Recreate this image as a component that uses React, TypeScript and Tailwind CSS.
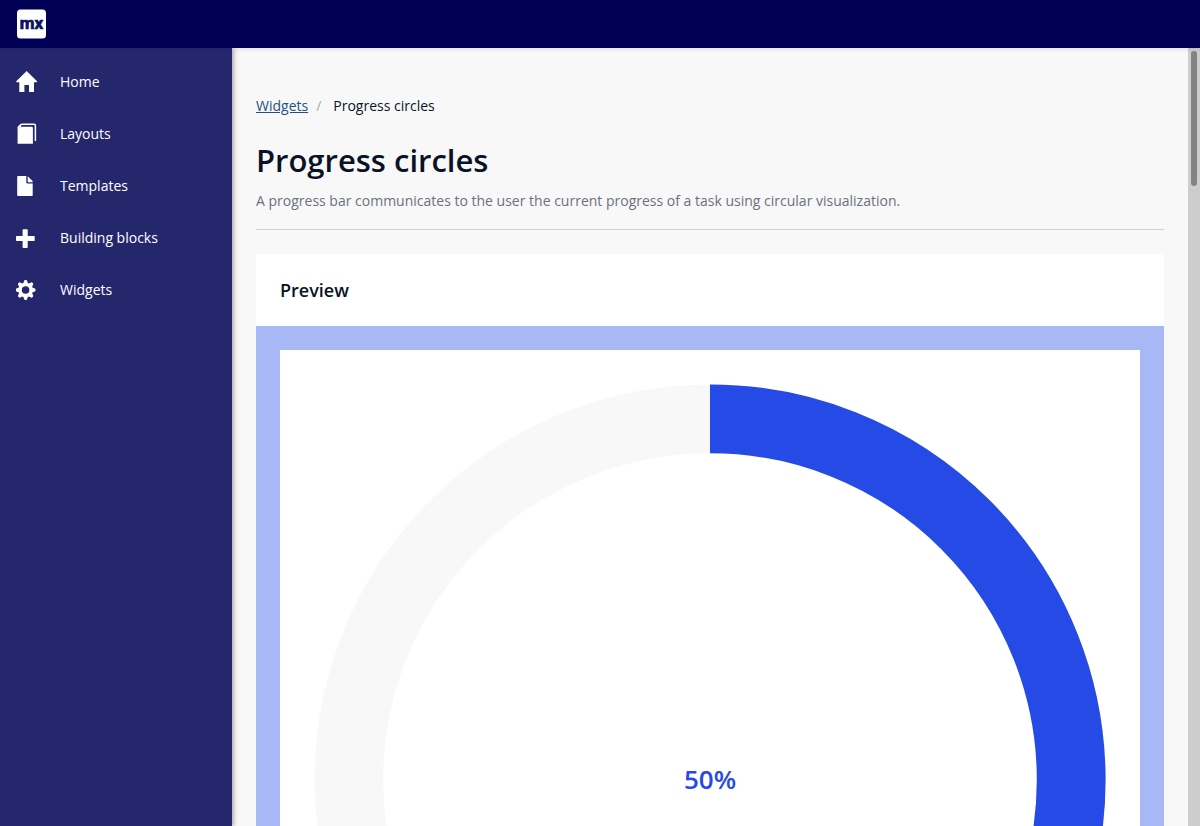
import type { ReactNode } from 'react';

const navItems: { label: string; icon: ReactNode }[] = [
  {
    label: 'Home',
    icon: <path d="M10.700 0 21.300 10.500 20.500 11.200H18V20.500Q18 21 17.500 21H13V14H8.400V21H3.800Q3.300 21 3.300 20.500V11.200H.800L0 10.500Z" />,
  },
  {
    label: 'Layouts',
    icon: (
      <>
        <path d="M2 4.500 4.200 2.200Q5.200 1.200 6.500 1.200H18Q19.400 1.200 19.400 2.600V18" fill="none" stroke="currentColor" strokeWidth="1.500" />
        <path d="M5.200 3.700H15.600Q16.900 3.700 16.900 5V20.700H1.600V5.500Q3.800 5.200 5.200 3.700Z" />
        <path d="M1.600 6V4.500L4.600 1.400 5.200 4Z" />
      </>
    ),
  },
  {
    label: 'Templates',
    icon: (
      <>
        <path d="M2 1H10.300V7.600Q10.300 8.600 11.300 8.600H16.700V20.300Q16.700 21 16 21H1.900Q1.200 21 1.200 20.300V1.700Q1.200 1 2 1Z" />
        <path d="M11.700 1.200 16.600 6V7.200H12.200Q11.700 7.200 11.700 6.700Z" />
      </>
    ),
  },
  {
    label: 'Building blocks',
    icon: <path d="M7.300 2.300H11Q11.700 2.300 11.700 3V9.100H18Q18.700 9.100 18.700 9.800V13.300Q18.700 14 18 14H11.700V20.300Q11.700 21 11 21H7.300Q6.600 21 6.600 20.300V14H.700Q0 14 0 13.300V9.800Q0 9.100 .700 9.100H6.600V3Q6.600 2.300 7.300 2.300Z" />,
  },
  {
    label: 'Widgets',
    icon: (
      <g transform="translate(9.600 11)">
        <path
          fillRule="evenodd"
          d="M0-7.300a7.300 7.300 0 1 1 0 14.600a7.300 7.300 0 1 1 0-14.600ZM0-3.800a3.800 3.800 0 1 0 0 7.600a3.800 3.800 0 1 0 0-7.600Z"
        />
        {[0, 45, 90, 135, 180, 225, 270, 315].map((angle) => (
          <path key={angle} transform={`rotate(${angle})`} d="M-2.500-6.500-1.400-9.200Q-1.200-9.900-.600-9.900H.600Q1.200-9.900 1.400-9.200L2.500-6.500Z" />
        ))}
      </g>
    ),
  },
];

function Header() {
  return (
    <header className="relative z-20 flex h-12 shrink-0 items-center bg-[#000056] px-4 shadow-[0_2px_4px_rgba(0,0,0,0.08)]">
      <a href="#home" aria-label="Mendix home" className="ml-px block">
        <svg width="30" height="30" viewBox="0 0 30 30" aria-hidden="true">
          <rect width="29" height="29" y=".5" rx="3.500" fill="#fff" />
          <text
            x="14.500"
            y="20"
            textAnchor="middle"
            fontSize="17"
            fontWeight="700"
            fill="#0a1160"
            stroke="#0a1160"
            strokeWidth=".7"
            fontFamily="Roboto, sans-serif"
          >
            mx
          </text>
        </svg>
      </a>
    </header>
  );
}

function Sidebar() {
  return (
    <nav aria-label="Main" className="relative z-10 w-58 shrink-0 bg-[#24276c] pt-2 shadow-[2px_0_4px_rgba(0,0,0,0.3)]">
      <ul>
        {navItems.map(({ label, icon }) => (
          <li key={label}>
            <a href={`#${label.toLowerCase().replace(' ', '-')}`} className="flex h-13 items-center gap-5.5 px-4 text-white">
              <svg width="22" height="22" viewBox="0 0 22 22" fill="currentColor" aria-hidden="true">
                {icon}
              </svg>
              <span>{label}</span>
            </a>
          </li>
        ))}
      </ul>
    </nav>
  );
}

function ProgressCircle({ value }: { value: number }) {
  return (
    <div
      role="progressbar"
      aria-valuenow={value}
      aria-valuemin={0}
      aria-valuemax={100}
      aria-label="Progress"
      className="relative bg-white"
    >
      <svg viewBox="0 0 100 100" className="block w-full" fill="none" strokeWidth="8" aria-hidden="true">
        <circle cx="50" cy="50" r="42" stroke="#f8f8f8" />
        <circle
          cx="50"
          cy="50"
          r="42"
          stroke="#264ae5"
          pathLength="100"
          strokeDasharray={`${value} 100`}
          transform="rotate(-90 50 50)"
        />
      </svg>
      <div className="absolute inset-0 flex items-center justify-center text-[26px] font-semibold text-[#264ae5]">
        {value}%
      </div>
    </div>
  );
}

export default function App() {
  return (
    <div className="flex h-screen flex-col overflow-hidden bg-[#f8f8f8] font-['Open_Sans',sans-serif] text-sm text-[#0a1325]">
      <Header />
      <div className="flex min-h-0 flex-1">
        <Sidebar />
        <main className="min-w-0 flex-1 overflow-y-auto px-6 py-12 [scrollbar-width:none]">
          <nav aria-label="Breadcrumb">
            <ol className="flex">
              <li>
                <a href="#widgets" className="text-[#24527f] underline">Widgets</a>
              </li>
              <li aria-hidden="true" className="pr-3 pl-2 text-[#a9acb3]">/</li>
              <li aria-current="page">Progress circles</li>
            </ol>
          </nav>
          <h1 className="mt-6 text-[31px] leading-10 font-semibold">Progress circles</h1>
          <p className="mt-[11px] border-b border-[#ced0d3] pb-[18px] leading-5 text-[#6c717e]">
            A progress bar communicates to the user the current progress of a task using circular visualization.
          </p>
          <section className="mt-6 overflow-hidden rounded bg-white">
            <h2 className="p-6 text-lg leading-6 font-semibold">Preview</h2>
            <div className="bg-[#a8b7f5] p-6">
              <ProgressCircle value={50} />
            </div>
          </section>
        </main>
        <div aria-hidden="true" className="w-3 shrink-0 border-l border-[#d5cdc4] bg-[#cdcdcd] pt-[3px] pl-0.5">
          <div className="h-[135px] w-1.5 rounded-full bg-[#7f8585]" />
        </div>
      </div>
    </div>
  );
}
